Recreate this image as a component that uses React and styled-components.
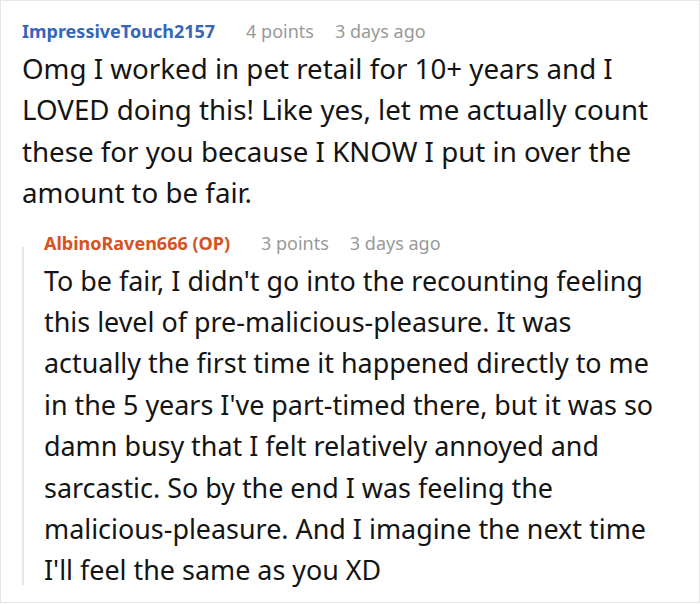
import React from "react";
import styled, { createGlobalStyle } from "styled-components";

const GlobalStyle = createGlobalStyle`
  html, body {
    margin: 0;
    padding: 0;
    background: #ffffff;
  }
  body {
    font-family: "Noto Sans", "Open Sans", sans-serif;
  }
`;

// Outer card with light frame
const Thread = styled.div`
  box-sizing: border-box;
  width: 700px;
  height: 603px;
  border: 1px solid #e6e6e6;
  padding: 18px 21px 0 21px;
  overflow: hidden;
`;

const Comment = styled.div`
  display: flex;
  flex-direction: column;
`;

const Reply = styled.div`
  position: relative;
  display: flex;
  flex-direction: column;
  margin-top: 17px;
  padding-left: 22px;

  /* thread guide line */
  &::before {
    content: "";
    position: absolute;
    left: 0;
    top: 16px;
    bottom: 6px;
    width: 2px;
    background: #e8e8e8;
  }
`;

const Meta = styled.div`
  display: flex;
  align-items: baseline;
  gap: 21px;
  height: 24px;
  line-height: 24px;
  font-size: 18px;
`;

const Author = styled.span`
  font-weight: 700;
  color: ${(p) => (p.$op ? "#d6531f" : "#3566b8")};
  margin-right: 10px;
`;

const Muted = styled.span`
  color: #999999;
`;

const Body = styled.p`
  margin: 5px 0 0 0;
  font-size: ${(p) => (p.$small ? "26.9px" : "27.7px")};
  line-height: 41.4px;
  color: #141414;
`;

const replyLines = [
  "To be fair, I didn't go into the recounting feeling",
  "this level of pre-malicious-pleasure. It was",
  "actually the first time it happened directly to me",
  "in the 5 years I've part-timed there, but it was so",
  "damn busy that I felt relatively annoyed and",
  "sarcastic. So by the end I was feeling the",
  "malicious-pleasure. And I imagine the next time",
  "I'll feel the same as you XD",
];

export default function App() {
  return (
    <>
      <GlobalStyle />
      <Thread>
        <Comment>
          <Meta>
            <Author>ImpressiveTouch2157</Author>
            <Muted>4 points</Muted>
            <Muted>3 days ago</Muted>
          </Meta>
          <Body>
            Omg I worked in pet retail for 10+ years and I LOVED doing this! Like
            yes, let me actually count these for you because I KNOW I put in over
            the amount to be fair.
          </Body>
        </Comment>
        <Reply>
          <Meta>
            <Author $op>AlbinoRaven666 (OP)</Author>
            <Muted>3 points</Muted>
            <Muted>3 days ago</Muted>
          </Meta>
          <Body $small>
            {replyLines.map((line, i) => (
              <React.Fragment key={i}>
                {line}
                {i < replyLines.length - 1 && <br />}
              </React.Fragment>
            ))}
          </Body>
        </Reply>
      </Thread>
    </>
  );
}
